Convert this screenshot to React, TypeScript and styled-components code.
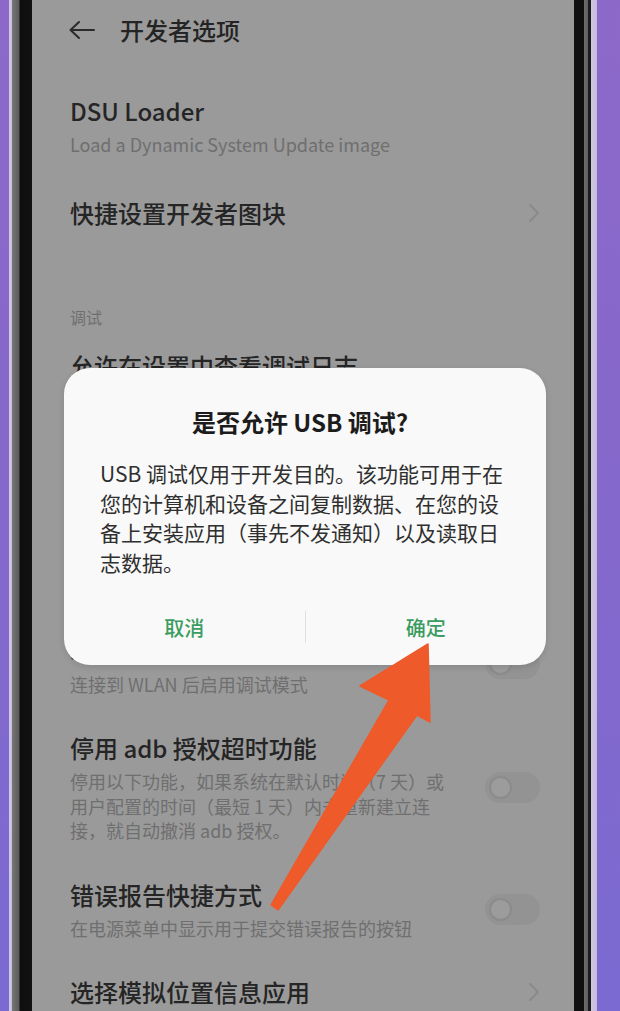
import React from "react";
import styled, { createGlobalStyle } from "styled-components";

const GlobalStyle = createGlobalStyle`
  html, body {
    margin: 0;
    padding: 0;
  }
  body {
    width: 620px;
    height: 1011px;
    overflow: hidden;
    background: #8a68c8;
    font-family: "Noto Sans CJK SC", "Noto Sans", sans-serif;
  }
`;

const Page = styled.div`
  position: relative;
  width: 620px;
  height: 1011px;
  display: flex;
  background: linear-gradient(180deg, #8c69c9 0%, #8468cb 55%, #7a6ad1 100%);
`;

// metal rim + black bezel on both sides of the display
const Phone = styled.div`
  margin-left: 9px;
  width: 588px;
  height: 100%;
  display: flex;
  background: linear-gradient(
    90deg,
    #d3cae5 0px,
    #c6bedb 3px,
    #767676 3px,
    #5c5c5c 10px,
    #0e0e0e 11px,
    #111111 23px,
    #111111 565px,
    #0f0f0f 575px,
    #6c6c6c 575px,
    #5e5e5e 579px,
    #1c1c1c 579px,
    #1c1c1c 582px,
    #cfc7e1 582px,
    #c4bcdb 588px
  );
`;

const Screen = styled.div`
  position: relative;
  margin-left: 23px;
  width: 542px;
  height: 100%;
  overflow: hidden;
  background: #9a9a9a;
`;

const Header = styled.div`
  height: 60px;
  display: flex;
  align-items: center;
  gap: 25px;
  padding-left: 36px;
`;

const HeaderTitle = styled.div`
  font-size: 24px;
  line-height: 32px;
  font-weight: 500;
  color: #242424;
`;

const List = styled.div`
  padding-top: 17px;
  display: flex;
  flex-direction: column;
`;

const Row = styled.div<{ $pad?: number }>`
  display: flex;
  align-items: center;
  padding: ${(p) => p.$pad ?? 18}px 34px ${(p) => p.$pad ?? 18}px 38px;
`;

const RowText = styled.div`
  flex: 1;
  display: flex;
  flex-direction: column;
`;

const Title = styled.div`
  font-size: 24px;
  line-height: 32px;
  font-weight: 500;
  color: #252525;
`;

const Sub = styled.div<{ $wide?: boolean; $gap?: number }>`
  margin-top: ${(p) => p.$gap ?? 5}px;
  font-size: 18px;
  line-height: 24.5px;
  color: #6f6f6f;
  max-width: ${(p) => (p.$wide ? "none" : "400px")};
  white-space: pre-line;
`;

const SectionLabel = styled.div`
  padding: 55px 38px 4px;
  font-size: 16px;
  line-height: 22px;
  color: #6f6f6f;
`;

const Toggle = styled.div`
  position: relative;
  flex: none;
  width: 55px;
  height: 31px;
  border-radius: 16px;
  background: #939393;
  &::after {
    content: "";
    position: absolute;
    left: 4px;
    top: 4px;
    width: 19px;
    height: 19px;
    border-radius: 50%;
    border: 2px solid #8b8b8b;
    background: #9c9c9c;
  }
`;

const Dialog = styled.div`
  position: absolute;
  left: 32px;
  top: 368px;
  width: 482px;
  height: 297px;
  border-radius: 26px;
  background: #f9f9f9;
  box-shadow: 0 2px 6px rgba(0, 0, 0, 0.12);
  display: flex;
  flex-direction: column;
`;

const DialogTitle = styled.div`
  padding-top: 39px;
  padding-right: 10px;
  font-size: 24px;
  line-height: 30px;
  font-weight: 700;
  text-align: center;
  color: #1c1c1c;
`;

const DialogBody = styled.div`
  margin-top: 22px;
  padding: 0 40px 0 36px;
  font-size: 21px;
  line-height: 29.5px;
  color: #2f2f2f;
`;

const DialogActions = styled.div`
  margin-top: auto;
  margin-bottom: 10px;
  height: 56px;
  display: flex;
  align-items: center;
`;

const ActionButton = styled.div`
  flex: 1;
  text-align: center;
  font-size: 20px;
  font-weight: 500;
  color: #3a9c61;
`;

const ActionDivider = styled.div`
  width: 1px;
  height: 32px;
  background: #e0e0e0;
`;

const ArrowLayer = styled.svg`
  position: absolute;
  left: 0;
  top: 0;
  pointer-events: none;
`;

const BackIcon = () => (
  <svg width="27" height="20" viewBox="0 0 27 20">
    <path
      d="M26 10H3M11 2L2.5 10L11 18"
      fill="none"
      stroke="#2a2a2a"
      strokeWidth="2"
      strokeLinecap="round"
      strokeLinejoin="round"
    />
  </svg>
);

const Chevron = () => (
  <svg width="12" height="20" viewBox="0 0 12 20">
    <path
      d="M2 2L10 10L2 18"
      fill="none"
      stroke="#8a8a8a"
      strokeWidth="2"
      strokeLinecap="round"
      strokeLinejoin="round"
    />
  </svg>
);

export default function App() {
  return (
    <>
      <GlobalStyle />
      <Page>
        <Phone>
          <Screen>
            <Header>
              <BackIcon />
              <HeaderTitle>开发者选项</HeaderTitle>
            </Header>
            <List>
              <Row>
                <RowText>
                  <Title>DSU Loader</Title>
                  <Sub $wide>Load a Dynamic System Update image</Sub>
                </RowText>
              </Row>
              <Row $pad={22}>
                <RowText>
                  <Title>快捷设置开发者图块</Title>
                </RowText>
                <Chevron />
              </Row>
              <SectionLabel>调试</SectionLabel>
              <Row>
                <RowText>
                  <Title>允许在设置中查看调试日志</Title>
                  <Sub>在设置中显示调试信息</Sub>
                </RowText>
              </Row>
              <Row>
                <RowText>
                  <Title>USB 调试</Title>
                  <Sub>连接 USB 后启用调试模式</Sub>
                </RowText>
                <Toggle />
              </Row>
              <Row $pad={27}>
                <RowText>
                  <Title>撤销 USB 调试授权</Title>
                </RowText>
              </Row>
              <Row>
                <RowText>
                  <Title>无线调试</Title>
                  <Sub $gap={9}>连接到 WLAN 后启用调试模式</Sub>
                </RowText>
                <Toggle />
              </Row>
              <Row>
                <RowText>
                  <Title>停用 adb 授权超时功能</Title>
                  <Sub>
                    {"停用以下功能，如果系统在默认时间（7 天）或\n用户配置的时间（最短 1 天）内未重新建立连\n接，就自动撤消 adb 授权。"}
                  </Sub>
                </RowText>
                <Toggle />
              </Row>
              <Row>
                <RowText>
                  <Title>错误报告快捷方式</Title>
                  <Sub>在电源菜单中显示用于提交错误报告的按钮</Sub>
                </RowText>
                <Toggle />
              </Row>
              <Row>
                <RowText>
                  <Title>选择模拟位置信息应用</Title>
                </RowText>
                <Chevron />
              </Row>
            </List>

            <Dialog>
              <DialogTitle>是否允许 USB 调试?</DialogTitle>
              <DialogBody>
                USB 调试仅用于开发目的。该功能可用于在您的计算机和设备之间复制数据、在您的设备上安装应用（事先不发通知）以及读取日志数据。
              </DialogBody>
              <DialogActions>
                <ActionButton>取消</ActionButton>
                <ActionDivider />
                <ActionButton>确定</ActionButton>
              </DialogActions>
            </Dialog>
          </Screen>
        </Phone>

        <ArrowLayer width="620" height="1011" viewBox="0 0 620 1011">
          <polygon
            points="428,644 430,722 417,715 278,910 271,905 389,700 360,686"
            fill="#ee5a2a"
            strokeLinejoin="round"
            stroke="#ee5a2a"
            strokeWidth="1.5"
          />
        </ArrowLayer>
      </Page>
    </>
  );
}
